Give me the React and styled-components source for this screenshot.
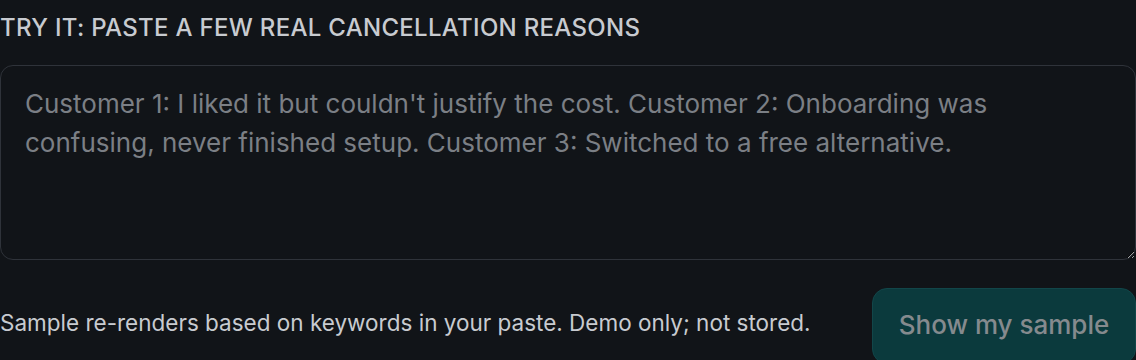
import React from "react";
import styled, { createGlobalStyle } from "styled-components";

const Global = createGlobalStyle`
  html, body { margin: 0; padding: 0; background: #111418; }
  body { font-family: Inter, "Noto Sans", sans-serif; }
`;

const Page = styled.div`
  width: 1136px;
  height: 360px;
  overflow: hidden;
  background: #111418;
  display: flex;
  flex-direction: column;
  box-sizing: border-box;
  padding-top: 13px;
`;

const Label = styled.label`
  display: block;
  font-size: 24px;
  line-height: 30px;
  letter-spacing: 0.3px;
  font-weight: 500;
  color: #c8cbd0;
  text-transform: uppercase;
  margin-bottom: 22px;
`;

const Area = styled.textarea`
  display: block;
  flex: none;
  box-sizing: border-box;
  width: 1136px;
  height: 195px;
  margin: 0;
  padding: 18px 24px;
  background: #111418;
  border: 1.5px solid #2f333a;
  border-radius: 13px;
  font-family: Inter, "Noto Sans", sans-serif;
  font-size: 26px;
  line-height: 39px;
  color: #d0d3d8;
  resize: vertical;
  outline: none;
  &::placeholder { color: #7b7f85; }
`;

const Footer = styled.div`
  display: flex;
  flex: none;
  align-items: flex-start;
  justify-content: space-between;
  margin-top: 28px;
`;

const Note = styled.p`
  margin: 0;
  padding-top: 20px;
  font-size: 22.5px;
  line-height: 30px;
  color: #c8cbd0;
`;

const Button = styled.button`
  box-sizing: border-box;
  width: 264px;
  height: 76px;
  border: 1px solid #124649;
  border-radius: 15px;
  background: #0b3a3d;
  color: #858a8e;
  font-family: Inter, "Noto Sans", sans-serif;
  font-size: 26px;
  font-weight: 500;
  padding: 0 0 4px;
  text-align: center;
  cursor: pointer;
`;

export default function App() {
  return (
    <>
      <Global />
      <Page>
        <Label htmlFor="reasons">Try it: paste a few real cancellation reasons</Label>
        <Area
          id="reasons"
          placeholder="Customer 1: I liked it but couldn't justify the cost. Customer 2: Onboarding was confusing, never finished setup. Customer 3: Switched to a free alternative."
        />
        <Footer>
          <Note>Sample re-renders based on keywords in your paste. Demo only; not stored.</Note>
          <Button type="button">Show my sample</Button>
        </Footer>
      </Page>
    </>
  );
}
